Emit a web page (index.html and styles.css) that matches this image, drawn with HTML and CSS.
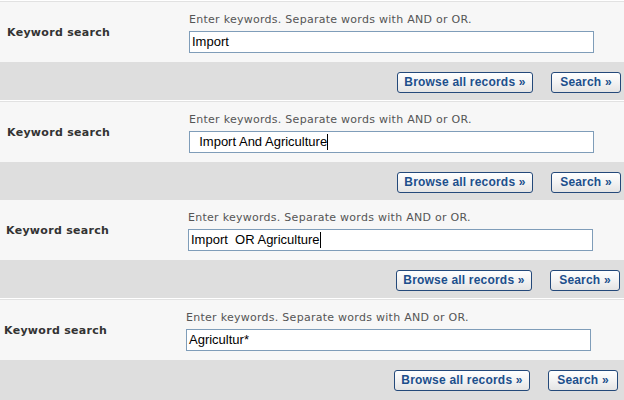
FILE: index.html
```html
<!DOCTYPE html>
<html>
<head>
<meta charset="utf-8">
<link rel="stylesheet" href="styles.css">
</head>
<body>
<div class="page">
  <section class="block">
    <div class="main">
      <div class="label">Keyword search</div>
      <div class="fieldcol">
        <div class="hint">Enter keywords. Separate words with AND or OR.</div>
        <div class="field">Import</div>
      </div>
    </div>
    <div class="actions">
      <button class="btn btn--browse">Browse all records »</button>
      <button class="btn btn--search">Search »</button>
    </div>
  </section>

  <section class="block">
    <div class="main">
      <div class="label">Keyword search</div>
      <div class="fieldcol">
        <div class="hint">Enter keywords. Separate words with AND or OR.</div>
        <div class="field">  Import And Agriculture<span class="caret"></span></div>
      </div>
    </div>
    <div class="actions">
      <button class="btn btn--browse">Browse all records »</button>
      <button class="btn btn--search">Search »</button>
    </div>
  </section>

  <section class="block block--plain block--s1">
    <div class="main">
      <div class="label">Keyword search</div>
      <div class="fieldcol">
        <div class="hint">Enter keywords. Separate words with AND or OR.</div>
        <div class="field">Import  OR Agriculture<span class="caret"></span></div>
      </div>
    </div>
    <div class="actions">
      <button class="btn btn--browse">Browse all records »</button>
      <button class="btn btn--search">Search »</button>
    </div>
  </section>

  <section class="block block--last block--s3">
    <div class="main">
      <div class="label">Keyword search</div>
      <div class="fieldcol">
        <div class="hint">Enter keywords. Separate words with AND or OR.</div>
        <div class="field">Agricultur*</div>
      </div>
    </div>
    <div class="actions">
      <button class="btn btn--browse">Browse all records »</button>
      <button class="btn btn--search">Search »</button>
    </div>
  </section>
</div>
</body>
</html>
```

FILE: styles.css
```css
html, body {
  margin: 0;
  padding: 0;
  background: #ffffff;
}

.page {
  display: flex;
  flex-direction: column;
  width: 624px;
  height: 400px;
  overflow: hidden;
}

.block {
  --shift: 0px;
  display: flex;
  flex-direction: column;
  border-top: 1px solid #ffffff;
}

.block--s1 { --shift: 1px; }
.block--s3 { --shift: 3px; }

.block--last {
  flex: 1;
}

.main {
  display: flex;
  align-items: center;
  height: 60px;
  background: #f7f7f7;
  border-top: 1px solid #e2e2e2;
  padding-left: calc(7px - var(--shift));
}

.block--plain {
  border-top: 0;
}
.block--plain .main {
  border-top: 0;
}

.label {
  width: 182px;
  font-family: "DejaVu Sans", Verdana, sans-serif;
  font-weight: bold;
  font-size: 11px;
  letter-spacing: 0.3px;
  color: #333333;
}

.fieldcol {
  align-self: flex-start;
  padding-top: 11px;
  display: flex;
  flex-direction: column;
  gap: 5px;
}

.hint {
  font-family: "DejaVu Sans", Verdana, sans-serif;
  font-size: 11px;
  line-height: 13px;
  letter-spacing: 0.27px;
  color: #555555;
}

.field {
  box-sizing: border-box;
  width: 405px;
  height: 22px;
  border: 1px solid #7f9db9;
  background: #ffffff;
  padding: 0 2px;
  font-family: "Liberation Sans", Arial, sans-serif;
  font-size: 13px;
  line-height: 20px;
  color: #000000;
  white-space: pre;
}

.caret {
  display: inline-block;
  width: 1px;
  height: 16px;
  background: #000000;
  vertical-align: -4px;
}

.actions {
  display: flex;
  justify-content: flex-end;
  align-items: flex-start;
  gap: 18px;
  height: 38px;
  box-sizing: border-box;
  padding-top: 10px;
  padding-right: calc(3px + var(--shift));
  background: #dedede;
}

.block--last .actions {
  flex: 1;
}

.btn {
  box-sizing: border-box;
  height: 21px;
  padding: 0;
  border: 1px solid #24497a;
  border-radius: 3px;
  background: linear-gradient(#ffffff, #f3f3f3 50%, #e4e4e4);
  font-family: "Liberation Sans", Arial, sans-serif;
  font-weight: bold;
  font-size: 12px;
  letter-spacing: 0.2px;
  line-height: 19px;
  color: #1d4f8c;
  text-align: center;
  cursor: pointer;
}

.btn--browse { width: 136px; }
.btn--search { width: 70px; }
```
